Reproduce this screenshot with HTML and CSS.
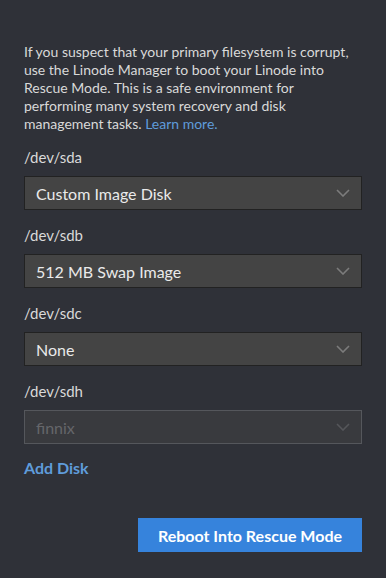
FILE: index.html
```html
<!DOCTYPE html>
<html>
<head>
<meta charset="utf-8">
<link rel="stylesheet" href="styles.css">
</head>
<body>
<div class="panel">
  <p class="intro">If you suspect that your primary filesystem is corrupt, use the Linode Manager to boot your Linode into Rescue Mode. This is a safe environment for performing many system recovery and disk management tasks. <a class="link" href="#">Learn more.</a></p>

  <div class="field">
    <div class="label">/dev/sda</div>
    <div class="select"><span class="value">Custom Image Disk</span><svg class="chev" width="14" height="8" viewBox="0 0 14 8"><path d="M1 1 L7 7 L13 1" fill="none" stroke="currentColor" stroke-width="1.6"/></svg></div>
  </div>
  <div class="field">
    <div class="label">/dev/sdb</div>
    <div class="select"><span class="value">512 MB Swap Image</span><svg class="chev" width="14" height="8" viewBox="0 0 14 8"><path d="M1 1 L7 7 L13 1" fill="none" stroke="currentColor" stroke-width="1.6"/></svg></div>
  </div>
  <div class="field">
    <div class="label">/dev/sdc</div>
    <div class="select"><span class="value">None</span><svg class="chev" width="14" height="8" viewBox="0 0 14 8"><path d="M1 1 L7 7 L13 1" fill="none" stroke="currentColor" stroke-width="1.6"/></svg></div>
  </div>
  <div class="field">
    <div class="label">/dev/sdh</div>
    <div class="select disabled"><span class="value">finnix</span><svg class="chev" width="14" height="8" viewBox="0 0 14 8"><path d="M1 1 L7 7 L13 1" fill="none" stroke="currentColor" stroke-width="1.6"/></svg></div>
  </div>

  <a class="add" href="#">Add Disk</a>

  <div class="actions">
    <button class="btn">Reboot Into Rescue Mode</button>
  </div>
</div>
</body>
</html>
```

FILE: styles.css
```css
html, body {
  margin: 0;
  padding: 0;
  background: #2f3138;
  height: 100%;
}
.panel {
  box-sizing: border-box;
  width: 386px;
  height: 578px;
  padding: 43px 24px 0 24px;
  font-family: Lato, "Noto Sans", sans-serif;
  color: #d9d9d9;
  display: flex;
  flex-direction: column;
}
.intro {
  margin: 0 0 15px 0;
  font-size: 14px;
  line-height: 18px;
}
.link {
  color: #5f9cdb;
  text-decoration: none;
}
.field {
  display: flex;
  flex-direction: column;
  gap: 10px;
  margin-bottom: 16px;
}
.label {
  font-size: 15px;
  line-height: 18px;
  color: #d9d9d9;
}
.select {
  box-sizing: border-box;
  height: 34px;
  background: #444444;
  border: 1px solid #222222;
  display: flex;
  align-items: center;
  justify-content: space-between;
  padding: 0 11px 0 11px;
  color: #eaeaea;
  font-size: 16px;
}
.chev {
  color: #7c7c7c;
}
.select.disabled {
  background: #393a3e;
  border-color: #55575c;
  color: #65666a;
}
.select.disabled .chev {
  color: #55565a;
}
.add {
  margin-top: -1px;
  font-size: 16px;
  line-height: 18px;
  font-weight: bold;
  color: #5f9cdb;
  text-decoration: none;
  align-self: flex-start;
}
.actions {
  display: flex;
  justify-content: flex-end;
  margin-top: 41px;
}
.btn {
  height: 34px;
  width: 224px;
  border: none;
  background: #3683dc;
  color: #ffffff;
  font-family: Lato, "Noto Sans", sans-serif;
  font-size: 16px;
  font-weight: bold;
  padding: 0;
}
```
